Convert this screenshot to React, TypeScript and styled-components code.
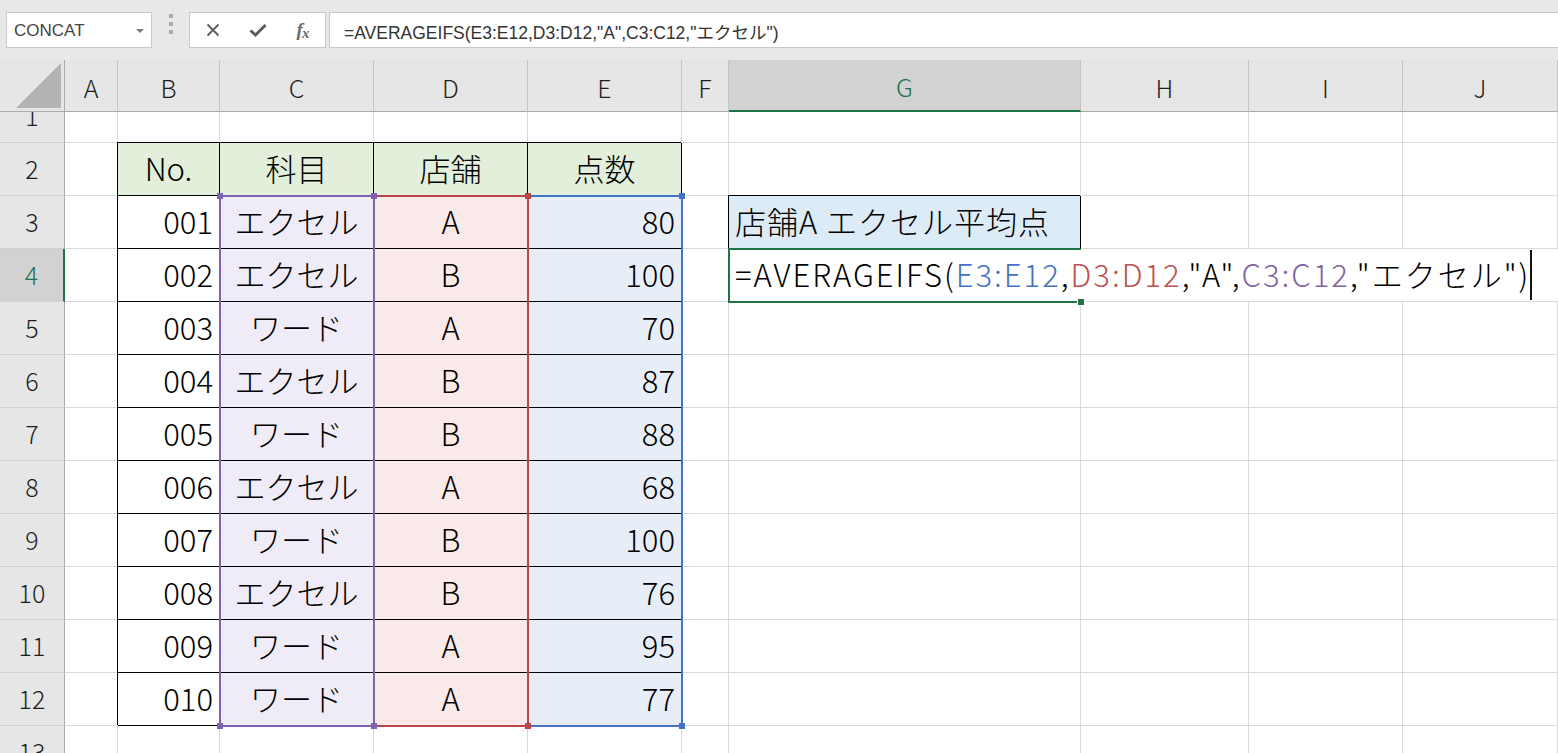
import React from 'react';
import styled, { createGlobalStyle, css } from 'styled-components';

const CELL_FONT = `"Noto Sans CJK JP", "Noto Sans", sans-serif`;
const UI_FONT = `"Liberation Sans", "Noto Sans CJK JP", sans-serif`;
const GREEN = '#217346';
const GRID = '#d9d9d9';

const GlobalStyle = createGlobalStyle`
  html, body { margin: 0; padding: 0; background: #fff; overflow: hidden; }
  body { font-family: ${CELL_FONT}; }
  *, *::before, *::after { box-sizing: border-box; }
`;

const Window = styled.div`
  width: 1558px;
  height: 753px;
  display: flex;
  flex-direction: column;
  overflow: hidden;
  background: #fff;
`;

/* ---------- formula bar ---------- */
const FormulaBar = styled.div`
  flex: none;
  height: 60px;
  background: #e8e8e8;
  display: flex;
  align-items: flex-start;
  padding: 12px 0 0 6px;
`;

const NameBox = styled.div`
  width: 146px;
  height: 36px;
  background: #fff;
  border: 1px solid #c8c8c8;
  display: flex;
  align-items: center;
  padding: 0 7px 0 7px;
  font-family: ${UI_FONT};
  font-size: 17px;
  color: #444;
`;

const NameText = styled.span`
  flex: 1;
  padding-top: 2px;
`;

const DropCaret = styled.span`
  width: 0;
  height: 0;
  border-left: 4px solid transparent;
  border-right: 4px solid transparent;
  border-top: 4px solid #7a7a7a;
  margin-top: 2px;
`;

const Grip = styled.div`
  width: 4px;
  margin: 2px 16px 0 17px;
  display: flex;
  flex-direction: column;
  gap: 4px;
`;

const GripDot = styled.span`
  width: 4px;
  height: 4px;
  background: #ababab;
`;

const ButtonBox = styled.div`
  width: 137px;
  height: 36px;
  background: #fff;
  border: 1px solid #c8c8c8;
  display: flex;
  align-items: center;
`;

const IconSlot = styled.span`
  width: 45px;
  height: 34px;
  display: flex;
  align-items: center;
  justify-content: center;
  color: #5a5a5a;
`;

const Fx = styled.span`
  font-family: "Liberation Serif", serif;
  font-style: italic;
  font-weight: bold;
  font-size: 19px;
  color: #6a6a6a;
  letter-spacing: -1px;
  & > span {
    font-size: 15px;
    position: relative;
    top: 2px;
  }
`;

const FormulaInput = styled.div`
  flex: 1;
  height: 36px;
  margin-left: 3px;
  background: #fff;
  border: 1px solid #c8c8c8;
  border-right: none;
  display: flex;
  align-items: center;
  padding: 2px 0 0 14px;
  font-family: ${UI_FONT};
  font-size: 17.5px;
  color: #333;
  white-space: nowrap;
`;

/* ---------- sheet ---------- */
const Sheet = styled.div`
  flex: none;
  height: 693px;
  display: grid;
  grid-template-columns: 65px 53px 102px 154px 154px 154px 47px 352px 168px 154px 155px;
  grid-template-rows: 52px 31px repeat(11, 53px) 28px;
  overflow: hidden;
  font-family: ${CELL_FONT};
  font-weight: 300;
`;

const Corner = styled.div`
  grid-row: 1;
  grid-column: 1;
  background: #e6e6e6;
  border-right: 1px solid #ababab;
  border-bottom: 1px solid #ababab;
  display: flex;
  align-items: flex-end;
  justify-content: flex-end;
  padding: 0 3px 3px 0;
`;

const ColHead = styled.div<{ $c: number; $active?: boolean }>`
  grid-row: 1;
  grid-column: ${p => p.$c};
  background: ${p => (p.$active ? '#d2d2d2' : '#e6e6e6')};
  color: ${p => (p.$active ? GREEN : '#1e1e1e')};
  border-right: 1px solid #c4c4c4;
  border-bottom: ${p => (p.$active ? `2px solid ${GREEN}` : '1px solid #ababab')};
  display: flex;
  align-items: center;
  justify-content: center;
  font-size: 25px;
  padding-top: 2px;
`;

const RowHead = styled.div<{ $r: number; $active?: boolean; $anchor: 'start' | 'end' | 'center' }>`
  grid-row: ${p => p.$r};
  grid-column: 1;
  background: ${p => (p.$active ? '#d2d2d2' : '#e6e6e6')};
  color: ${p => (p.$active ? GREEN : '#1e1e1e')};
  border-right: ${p => (p.$active ? `2px solid ${GREEN}` : '1px solid #ababab')};
  border-bottom: 1px solid #d0d0d0;
  display: flex;
  justify-content: center;
  align-items: ${p => (p.$anchor === 'center' ? 'center' : `flex-${p.$anchor}`)};
  overflow: hidden;
  font-size: 25px;
`;

const RowLabel = styled.span`
  flex: none;
  height: 52px;
  line-height: 50px;
`;

type Align = 'left' | 'center' | 'right';

const Cell = styled.div<{ $r: number; $c: number; $bg?: string; $boxed?: boolean; $align?: Align }>`
  grid-row: ${p => p.$r};
  grid-column: ${p => p.$c};
  min-width: 0;
  background: ${p => p.$bg ?? '#fff'};
  border-right: 1px solid ${p => (p.$boxed ? '#000' : GRID)};
  border-bottom: 1px solid ${p => (p.$boxed ? '#000' : GRID)};
  ${p =>
    p.$boxed &&
    css`
      box-shadow: -1px -1px 0 #000;
    `}
  display: flex;
  align-items: center;
  justify-content: ${p =>
    p.$align === 'right' ? 'flex-end' : p.$align === 'center' ? 'center' : 'flex-start'};
  padding: 0 6px 3px 6px;
  font-size: 31px;
  letter-spacing: ${p => (p.$align === 'left' ? '1px' : '0')};
  color: #000;
  white-space: nowrap;
`;

const RangeBox = styled.div<{ $c: number; $color: string }>`
  grid-column: ${p => p.$c};
  grid-row: 4 / 14;
  margin: -1px;
  border: 2px solid ${p => p.$color};
  position: relative;
  pointer-events: none;
`;

const Handle = styled.span<{ $pos: 'tl' | 'tr' | 'bl' | 'br'; $color: string }>`
  position: absolute;
  width: 6px;
  height: 6px;
  background: ${p => p.$color};
  ${p => (p.$pos[0] === 't' ? 'top: -4px;' : 'bottom: -4px;')}
  ${p => (p.$pos[1] === 'l' ? 'left: -4px;' : 'right: -4px;')}
`;

const Editor = styled.div`
  grid-row: 5;
  grid-column: 8 / 12;
  margin-bottom: 1px;
  background: #fff;
  display: flex;
  align-items: center;
  padding: 0 0 3px 6px;
  font-size: 31px;
  white-space: nowrap;
  position: relative;
`;

const FormulaLine = styled.span`
  flex: none;
  color: #000;
  letter-spacing: 2px;
`;

const RefText = styled.span<{ $color: string }>`
  color: ${p => p.$color};
`;

const TextCursor = styled.span`
  flex: none;
  width: 2px;
  height: 50px;
  margin: 3px 0 0 0;
  background: #111;
`;

const ActiveBorder = styled.div`
  grid-row: 5;
  grid-column: 8;
  margin: -1px 0 -1px -1px;
  border: 2px solid ${GREEN};
  border-right: none;
  position: relative;
  pointer-events: none;
`;

const FillHandle = styled.span`
  position: absolute;
  right: -3px;
  bottom: -4px;
  width: 6px;
  height: 6px;
  background: ${GREEN};
  outline: 1px solid #fff;
`;

/* ---------- data ---------- */
const COL_LETTERS = ['A', 'B', 'C', 'D', 'E', 'F', 'G', 'H', 'I', 'J'];
const HEAD = ['No.', '科目', '店舗', '点数'];
const DATA: string[][] = [
  ['001', 'エクセル', 'A', '80'],
  ['002', 'エクセル', 'B', '100'],
  ['003', 'ワード', 'A', '70'],
  ['004', 'エクセル', 'B', '87'],
  ['005', 'ワード', 'B', '88'],
  ['006', 'エクセル', 'A', '68'],
  ['007', 'ワード', 'B', '100'],
  ['008', 'エクセル', 'B', '76'],
  ['009', 'ワード', 'A', '95'],
  ['010', 'ワード', 'A', '77'],
];
const RANGE_BG = ['#ffffff', '#f0ecf7', '#f9e9e9', '#e8eef8'];
const ALIGNS: Align[] = ['right', 'center', 'center', 'right'];

const BLUE = '#4472c4';
const RED = '#c0504d';
const PURPLE = '#8064a2';

type CellInfo = { text?: string; bg?: string; boxed?: boolean; align?: Align };

function cellInfo(row: number, col: number): CellInfo {
  if (row === 2 && col >= 3 && col <= 6) {
    return { text: HEAD[col - 3], bg: '#e2efda', boxed: true, align: 'center' };
  }
  if (row >= 3 && row <= 12 && col >= 3 && col <= 6) {
    return {
      text: DATA[row - 3][col - 3],
      bg: RANGE_BG[col - 3],
      boxed: true,
      align: ALIGNS[col - 3],
    };
  }
  if (row === 3 && col === 8) {
    return { text: '店舗A エクセル平均点', bg: '#ddebf7', boxed: true, align: 'left' };
  }
  return {};
}

const ROWS = Array.from({ length: 13 }, (_, i) => i + 1);
const COLS = Array.from({ length: 10 }, (_, i) => i + 2);

const ranges = [
  { c: 6, color: BLUE },
  { c: 5, color: '#b94646' },
  { c: 4, color: '#7f62b0' },
];

export default function App() {
  return (
    <>
      <GlobalStyle />
      <Window>
        <FormulaBar>
          <NameBox>
            <NameText>CONCAT</NameText>
            <DropCaret />
          </NameBox>
          <Grip>
            <GripDot />
            <GripDot />
            <GripDot />
          </Grip>
          <ButtonBox>
            <IconSlot>
              <svg width="14" height="14" viewBox="0 0 14 14">
                <path d="M1.5 1.5 L12.5 12.5 M12.5 1.5 L1.5 12.5" stroke="#5c5c5c" strokeWidth="1.8" />
              </svg>
            </IconSlot>
            <IconSlot>
              <svg width="18" height="14" viewBox="0 0 18 14">
                <path d="M1.5 7.5 L6.5 12 L16.5 2" stroke="#5c5c5c" strokeWidth="3" fill="none" />
              </svg>
            </IconSlot>
            <IconSlot>
              <Fx>
                f<span>x</span>
              </Fx>
            </IconSlot>
          </ButtonBox>
          <FormulaInput>=AVERAGEIFS(E3:E12,D3:D12,"A",C3:C12,"エクセル")</FormulaInput>
        </FormulaBar>

        <Sheet>
          <Corner>
            <svg width="45" height="45" viewBox="0 0 45 45">
              <polygon points="45,0 45,45 0,45" fill="#b4b4b4" />
            </svg>
          </Corner>
          {COL_LETTERS.map((l, i) => (
            <ColHead key={l} $c={i + 2} $active={l === 'G'}>
              {l}
            </ColHead>
          ))}
          {ROWS.map(n => (
            <RowHead
              key={`rh${n}`}
              $r={n + 1}
              $active={n === 4}
              $anchor={n === 1 ? 'end' : n === 13 ? 'start' : 'center'}
            >
              <RowLabel>{n}</RowLabel>
            </RowHead>
          ))}
          {ROWS.map(n =>
            COLS.map(c => {
              const info = cellInfo(n, c);
              return (
                <Cell
                  key={`c${n}-${c}`}
                  $r={n + 1}
                  $c={c}
                  $bg={info.bg}
                  $boxed={info.boxed}
                  $align={info.align}
                >
                  {info.text}
                </Cell>
              );
            })
          )}

          {ranges.map(r => (
            <RangeBox key={r.c} $c={r.c} $color={r.color}>
              <Handle $pos="tl" $color={r.color} />
              <Handle $pos="tr" $color={r.color} />
              <Handle $pos="bl" $color={r.color} />
              <Handle $pos="br" $color={r.color} />
            </RangeBox>
          ))}

          <Editor>
            <FormulaLine>
              =AVERAGEIFS(<RefText $color={BLUE}>E3:E12</RefText>,<RefText $color={RED}>D3:D12</RefText>,"A",
              <RefText $color={PURPLE}>C3:C12</RefText>,"エクセル")
            </FormulaLine>
            <TextCursor />
          </Editor>
          <ActiveBorder>
            <FillHandle />
          </ActiveBorder>
        </Sheet>
      </Window>
    </>
  );
}
